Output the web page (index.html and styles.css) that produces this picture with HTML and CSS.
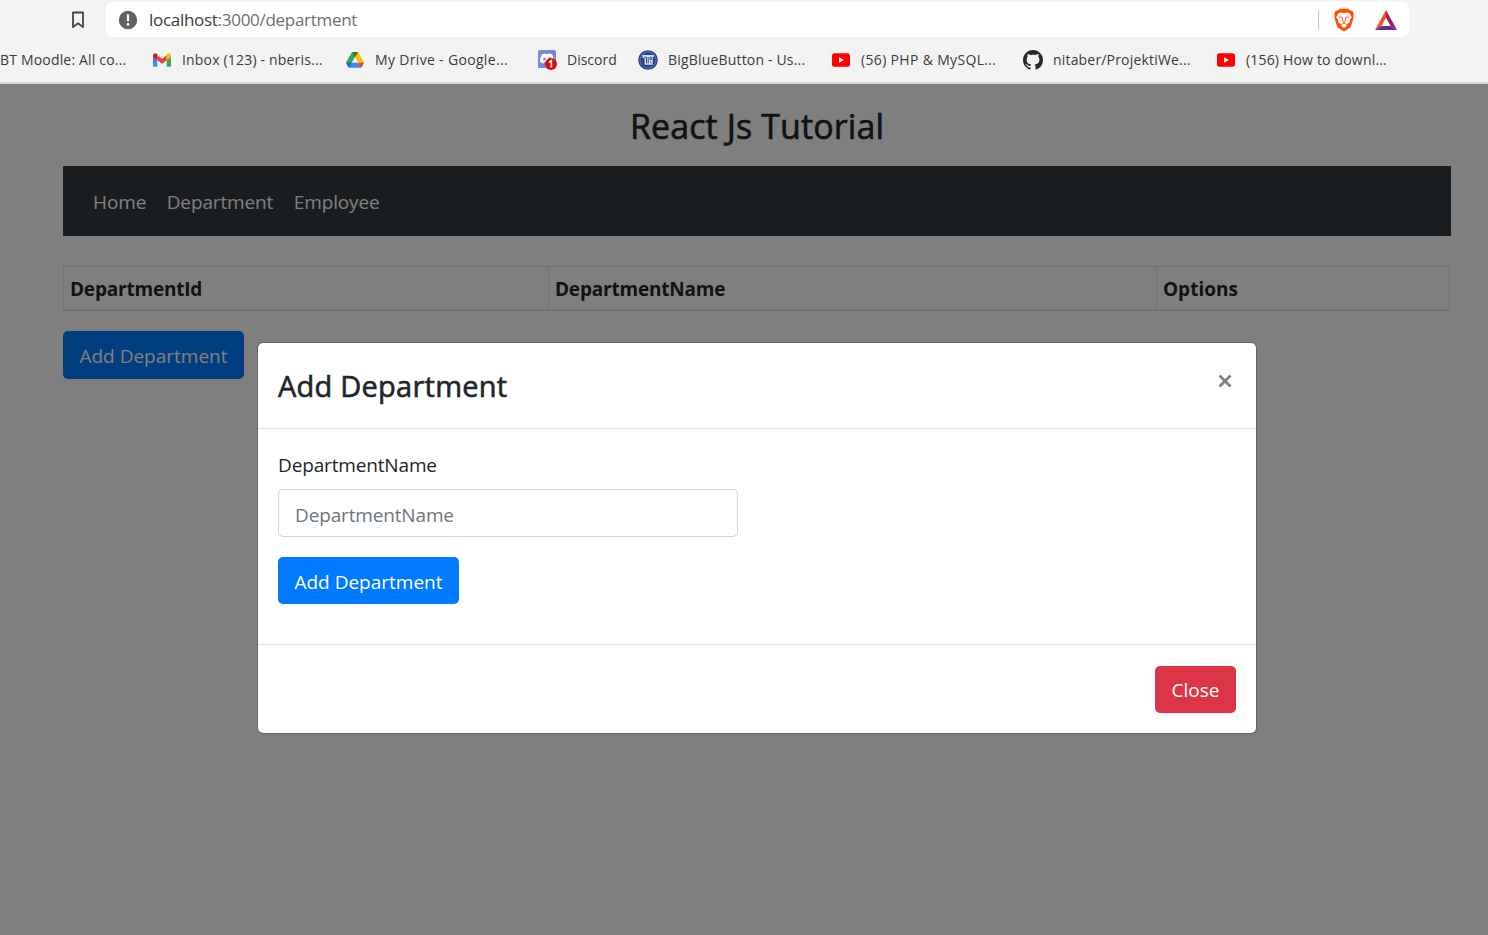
FILE: index.html
```html
<!DOCTYPE html>
<html lang="en">
<head>
<meta charset="utf-8">
<title>React Js Tutorial</title>
<link rel="stylesheet" href="styles.css">
</head>
<body>
<header class="browser">
  <div class="toolbar">
    <svg class="bookmark-icon" viewBox="0 0 14 18"><path d="M2 1.500h10v14.600L7 12.300l-5 3.800z" fill="none" stroke="#444" stroke-width="1.800" stroke-linejoin="round"/></svg>
    <div class="address">
      <svg class="info-icon" viewBox="0 0 20 20"><circle cx="10" cy="10" r="9.200" fill="#5f6368"/><path d="M10 4.300v6.900" stroke="#fff" stroke-width="2.200"/><circle cx="10" cy="14.400" r="1.300" fill="#fff"/></svg>
      <span class="url"><span class="host">localhost</span>:3000/department</span>
      <span class="divider"></span>
      <svg class="brave" viewBox="0 0 20 24"><path d="M5.500.8h9l1.800 2 2-.2L19.800 6l-.5 2.200.4 1.200-3 9.800L10 23.400 3.300 19.200.3 9.400.7 8.200.2 6l1.500-3.400 2 .2z" fill="#ff5000"/><path d="M4.800 5 7.500 4.500 10 5.200l2.500-.7 2.700.5 2.600 4.200-2.200 3 .4 2-3.400 2.200.4 1.200L10 20l-3-2.400.4-1.200L4 14.200l.4-2-2.200-3z" fill="#fff"/><path d="M5.200 8.900l3.200.5M14.800 8.900l-3.200.5M8.700 9.500l-.5 3.200 1.800 1 1.800-1-.5-3.200M10 13.500v1.700M7.500 16.500l2.500-1.300 2.500 1.300" fill="none" stroke="#ff5000" stroke-width=".9"/></svg>
      <svg class="bat" viewBox="0 0 24 22"><path d="M12 1 1 21l6.500-4L12 8.500z" fill="#ff4724"/><path d="M12 1l11 20-6.500-4L12 8.500z" fill="#9e1f63"/><path d="M1 21h22l-6.500-4h-9z" fill="#662d91"/></svg>
    </div>
  </div>
  <nav class="bookmarks">
    <a class="mark">BT Moodle: All co...</a>
    <a class="mark"><svg class="fav" viewBox="0 0 20 20"><path d="M1 5v10.500c0 .8.500 1.300 1.300 1.300h3V8.500z" fill="#4285f4"/><path d="M19 5v10.500c0 .8-.5 1.300-1.300 1.300h-3V8.500z" fill="#34a853"/><path d="M5.300 5.200 10 8.800l4.700-3.600v5L10 13.800l-4.700-3.600z" fill="#ea4335"/><path d="M1 5.500C1 3.300 3.200 2.700 4.700 3.800l.6.500v5.900L1 7.200z" fill="#c5221f"/><path d="M19 5.500c0-2.200-2.200-2.800-3.700-1.700l-.6.500v5.900L19 7.200z" fill="#fbbc04"/></svg>Inbox (123) - nberis...</a>
    <a class="mark mark-wide"><svg class="fav" viewBox="0 0 20 20"><path d="M7 2h6l-3 5.200L4.300 17 1 12.400z" fill="#34a853"/><path d="M7 2h6l6 10.400h-6L10 7.200z" fill="#fbbc04"/><path d="M7 2h6L10 7.200z" fill="#188038"/><path d="M1 12.400h6L4.300 17.800c-.7-.2-1-.6-1.300-1.100z" fill="#1967d2"/><path d="M7 12.400h6l2.700 5.400H4.300z" fill="#4285f4"/><path d="M13 12.400h6l-2 4.300c-.3.600-.7.900-1.300 1.100z" fill="#ea4335"/><path d="M10 7.200 7 12.400h6z" fill="#f3f3f3"/></svg>My Drive - Google...</a>
    <a class="mark mark-discord"><svg class="fav" viewBox="0 0 20 20"><rect x="1" y="0" width="18" height="18" rx="1.500" fill="#7289da"/><path d="M3 11.500c.1-3 1-5.500 1.800-7L8 3.300l.6.800h2.800l.6-.8 3.200 1.200c1 2 1.700 4 1.800 7-1 1.500-2.500 2-3.500 2l-1-1.300h-5l-1 1.300c-1-.1-2.500-.5-3.500-2z" fill="#fff"/><ellipse cx="7.500" cy="9" rx="1.400" ry="1.500" fill="#7289da"/><ellipse cx="12.500" cy="8.500" rx="1.400" ry="1.500" fill="#7289da"/><circle cx="14" cy="14" r="6" fill="#e00b0b"/><path d="M12 12.200l2.300-1.500v6.800" fill="none" stroke="#fff" stroke-width="1.700"/></svg>Discord</a>
    <a class="mark"><svg class="fav" viewBox="0 0 20 20"><circle cx="10" cy="10" r="9.800" fill="#25408f"/><circle cx="10" cy="10" r="8" fill="none" stroke="#7186b7" stroke-width=".8"/><path d="M4.500 5h11.200v2.200h-.9v7.600H6.600V8H4.500z" fill="#dce3f3"/><path d="M6.200 7.200h2.300v6.200M10.200 7v6.500M12 7.200h1.800v2.300H12zM12 11.200l1.600 2.300" stroke="#25408f" stroke-width=".9" fill="none"/></svg>BigBlueButton - Us...</a>
    <a class="mark mark-wide"><svg class="fav" viewBox="0 0 20 20"><rect x="1" y="3.200" width="18" height="13.600" rx="2.500" fill="#f00"/><path d="M8 7.200 13 10l-5 2.800z" fill="#fff"/></svg>(56) PHP &amp; MySQL...</a>
    <a class="mark"><svg class="fav" viewBox="0 0 16 16"><path fill="#24292e" d="M8 0C3.580 0 0 3.580 0 8c0 3.540 2.290 6.530 5.470 7.590.4.070.55-.17.55-.38 0-.19-.01-.82-.01-1.490-2.010.37-2.530-.49-2.690-.94-.09-.23-.48-.94-.82-1.130-.28-.15-.68-.52-.01-.53.63-.01 1.080.58 1.230.82.72 1.210 1.870.87 2.330.66.07-.52.28-.87.51-1.070-1.780-.2-3.640-.89-3.640-3.950 0-.87.31-1.590.82-2.150-.08-.2-.36-1.020.08-2.120 0 0 .67-.21 2.200.82.64-.18 1.320-.27 2-.27s1.360.09 2 .27c1.530-1.040 2.200-.82 2.200-.82.44 1.100.16 1.920.08 2.120.51.56.82 1.270.82 2.150 0 3.070-1.870 3.750-3.650 3.950.29.25.54.73.54 1.480 0 1.070-.01 1.930-.01 2.200 0 .21.15.46.55.38A8.010 8.010 0 0 0 16 8c0-4.420-3.580-8-8-8z"/></svg>nitaber/ProjektiWe...</a>
    <a class="mark"><svg class="fav" viewBox="0 0 20 20"><rect x="1" y="3.200" width="18" height="13.600" rx="2.500" fill="#f00"/><path d="M8 7.200 13 10l-5 2.800z" fill="#fff"/></svg>(156) How to downl...</a>
  </nav>
</header>
<div class="viewport">
  <main class="page">
    <h3 class="title">React Js Tutorial</h3>
    <nav class="navbar"><a>Home</a><a>Department</a><a>Employee</a></nav>
    <table class="table">
      <thead><tr><th class="col-id">DepartmentId</th><th class="col-name">DepartmentName</th><th class="col-options">Options</th></tr></thead>
    </table>
    <button class="btn btn-primary">Add Department</button>
  </main>
  <div class="backdrop">
    <section class="modal">
      <div class="modal-header"><h4 class="modal-title">Add Department</h4><svg class="close" viewBox="0 0 14 14"><path d="M1.500 1.500l11 11M12.500 1.500l-11 11" stroke="#7f7f7f" stroke-width="2.800"/></svg></div>
      <div class="modal-body">
        <label class="label">DepartmentName</label>
        <div class="input">DepartmentName</div>
        <button class="btn btn-primary">Add Department</button>
      </div>
      <div class="modal-footer"><button class="btn btn-danger">Close</button></div>
    </section>
  </div>
</div>
</body>
</html>
```
FILE: styles.css
```css
* { box-sizing: border-box; }
body {
  margin: 0;
  height: 935px;
  overflow: hidden;
  display: flex;
  flex-direction: column;
  font-family: "Open Sans", "Noto Sans", sans-serif;
  font-size: 19px;
  line-height: 30px;
  color: #212529;
}
.browser { height: 84px; background: #f3f3f3; border-bottom: 2px solid #d2d6da; flex: none; }
.toolbar { display: flex; padding: 2px 79px 0 71px; height: 37px; align-items: center; }
.bookmark-icon { width: 14px; height: 18px; margin-right: 21px; }
.address {
  flex: 1;
  height: 35px;
  display: flex;
  align-items: center;
  padding: 0 11px 0 12px;
  background: #fff;
  border-radius: 6px;
}
.info-icon { width: 20px; height: 20px; margin-right: 11px; }
.url { font-size: 17px; letter-spacing: -.29px; flex: 1; color: #6b6f73; }
.host { color: #3c3c3c; }
.divider { width: 1px; height: 20px; background: #c4c4c4; }
.brave { width: 20px; height: 24px; margin: 0 20px 0 15px; }
.bat { width: 24px; height: 22px; }
.bookmarks {
  display: grid;
  grid-template-columns: 152px 193px 192px 101px 193px 192px 193px 200px;
  height: 45px;
  align-items: center;
}
.mark { display: flex; align-items: center; gap: 10px; font-size: 14px; letter-spacing: .18px; color: #3a3a3a; white-space: nowrap; }
.mark-wide { letter-spacing: .33px; }
.mark-discord { letter-spacing: 0; }
.fav { width: 20px; height: 20px; flex: none; }
.viewport { flex: 1; display: grid; background: #fff; }
.page { grid-area: 1 / 1; padding: 20px 37px 0 63px; }
.title {
  margin: 0;
  height: 62px;
  font-size: 34px;
  line-height: 44px;
  font-weight: 500;
  text-align: center;
  letter-spacing: .1px;
  -webkit-text-stroke: .6px;
}
.navbar { height: 70px; background: #343a40; display: flex; align-items: center; gap: 20.5px; padding: 2px 30px 0; color: #fff; letter-spacing: -.13px; }
.table { width: 1387px; margin: 30px 0 20px; border-collapse: collapse; letter-spacing: -.2px; }
.table th { border: 1px solid #dee2e6; border-bottom-width: 2px; padding: 7px 6px 5px; height: 43px; text-align: left; font-weight: 700; }
.col-id { width: 485px; }
.col-name { width: 608px; }
.table .col-options { letter-spacing: 0; }
.btn { display: block; height: 48px; padding: 2px 16px 0; border: 0; border-radius: 5px; font: inherit; color: #fff; white-space: nowrap; }
.btn-primary { width: 181px; background: #007bff; }
.btn-danger { width: 81px; padding-top: 0; background: #dc3545; }
.backdrop { grid-area: 1 / 1; z-index: 1; background: rgba(0, 0, 0, .5); padding: 258px 0 0 257px; }
.modal { width: 1000px; height: 392px; background: #fff; background-clip: padding-box; border: 1px solid rgba(0, 0, 0, .2); border-radius: 6px; display: flex; flex-direction: column; }
.modal-header { height: 86px; border-bottom: 1px solid #dee2e6; display: flex; justify-content: space-between; padding: 20px 24px 0 20px; }
.modal-title { margin: 0; font-size: 29px; line-height: 45px; font-weight: 500; letter-spacing: .24px; -webkit-text-stroke: .6px; }
.close { width: 14px; height: 14px; margin-top: 11px; }
.modal-body { flex: 1; padding: 21px 20px; }
.label { display: block; height: 39px; letter-spacing: -.15px; }
.input { width: 460px; height: 48px; border: 1px solid #ced4da; border-radius: 5px; padding: 10px 16px; color: #6c757d; margin-bottom: 20px; letter-spacing: -.15px; }
.modal-body .btn, .modal-footer .btn { height: 47px; }
.modal-footer { height: 89px; border-top: 1px solid #dee2e6; display: flex; justify-content: flex-end; padding: 21px 20px; }
```
